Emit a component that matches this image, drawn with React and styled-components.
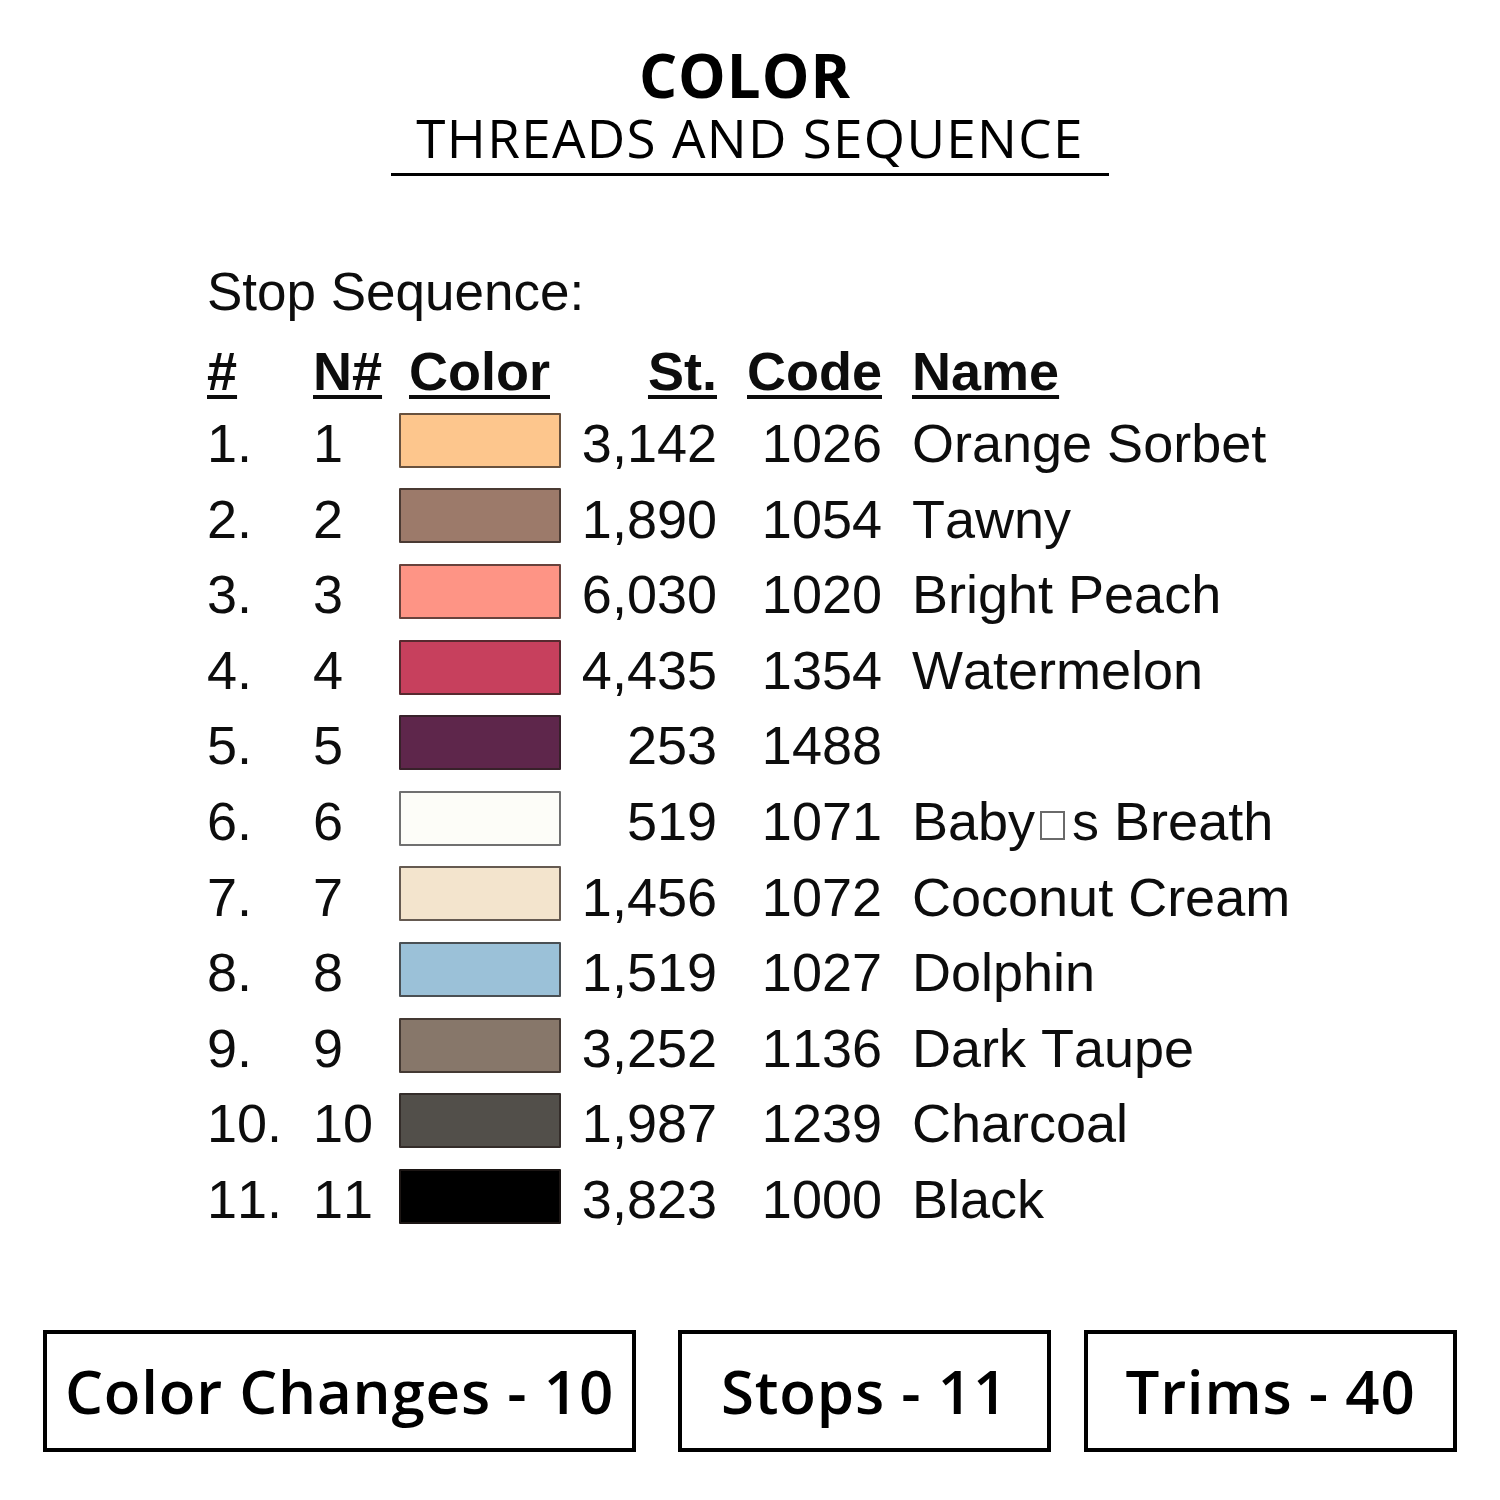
import styled, { createGlobalStyle } from "styled-components";

const GlobalStyle = createGlobalStyle`
  html, body {
    margin: 0;
    padding: 0;
    background: #fff;
  }
`;

const threads = [
  { no: 1, st: "3,142", code: "1026", name: "Orange Sorbet", color: "#fdc68d" },
  { no: 2, st: "1,890", code: "1054", name: "Tawny", color: "#9c7a6a" },
  { no: 3, st: "6,030", code: "1020", name: "Bright Peach", color: "#fe9485" },
  { no: 4, st: "4,435", code: "1354", name: "Watermelon", color: "#c7405d" },
  { no: 5, st: "253", code: "1488", name: "", color: "#5e264b" },
  { no: 6, st: "519", code: "1071", name: "Baby|s Breath", color: "#fdfdf8", light: true },
  { no: 7, st: "1,456", code: "1072", name: "Coconut Cream", color: "#f3e4cd" },
  { no: 8, st: "1,519", code: "1027", name: "Dolphin", color: "#9bc1d8" },
  { no: 9, st: "3,252", code: "1136", name: "Dark Taupe", color: "#87776a" },
  { no: 10, st: "1,987", code: "1239", name: "Charcoal", color: "#524f4a" },
  { no: 11, st: "3,823", code: "1000", name: "Black", color: "#000000" },
];

// the export lost the apostrophe, shown as an empty box
const ThreadName = ({ name }) => {
  const parts = name.split("|");
  if (parts.length === 1) return name;
  return (
    <>
      {parts[0]}
      <Missing />
      {parts[1]}
    </>
  );
};

const App = () => {
  return (
    <Page>
      <GlobalStyle />
      <Header>
        <Title>COLOR</Title>
        <Subtitle>THREADS AND SEQUENCE</Subtitle>
      </Header>
      <Sequence>
        <Caption>Stop Sequence:</Caption>
        <HeadRow>
          <Cell>#</Cell>
          <Cell>N#</Cell>
          <Cell $indent={10}>Color</Cell>
          <Cell $right>St.</Cell>
          <Cell $right>Code</Cell>
          <NameCell>Name</NameCell>
        </HeadRow>
        {threads.map((t) => (
          <Row key={t.no}>
            <Cell>{t.no}.</Cell>
            <Cell>{t.no}</Cell>
            <Swatch $color={t.color} $light={t.light} />
            <Cell $right>{t.st}</Cell>
            <Cell $right>{t.code}</Cell>
            <NameCell>
              <ThreadName name={t.name} />
            </NameCell>
          </Row>
        ))}
      </Sequence>
      <Stats>
        <StatBox $width={593}>Color Changes - 10</StatBox>
        <StatBox $width={373}>Stops - 11</StatBox>
        <StatBox $width={373}>Trims - 40</StatBox>
      </Stats>
    </Page>
  );
};

const Page = styled.div`
  width: 1500px;
  height: 1500px;
  display: flex;
  flex-direction: column;
  color: #000;
  overflow: hidden;
`;

const Header = styled.div`
  display: flex;
  flex-direction: column;
  align-items: center;
  padding-top: 45px;
  font-family: "Open Sans", "Liberation Sans", sans-serif;
`;

const Title = styled.div`
  font-size: 60px;
  line-height: 60px;
  font-weight: 700;
  letter-spacing: 1px;
  margin-right: 10px;
`;

const Subtitle = styled.div`
  margin-top: 6px;
  font-size: 53px;
  line-height: 53px;
  font-weight: 400;
  letter-spacing: 1.3px;
  padding: 0 25px 9px;
  border-bottom: 3px solid #000;
`;

const Sequence = styled.div`
  margin-top: 81px;
  padding-left: 207px;
  font-family: "Liberation Sans", Arial, sans-serif;
  font-size: 54px;
  font-kerning: none;
  color: #0d0d0d;
`;

const Caption = styled.div`
  height: 69px;
  line-height: 69px;
  margin-bottom: 11px;
  font-size: 53px;
`;

const columns = `106px 86px 162px 156px 165px 1fr`;

const HeadRow = styled.div`
  display: grid;
  grid-template-columns: ${columns};
  height: 69px;
  line-height: 69px;
  font-weight: 700;
  & > div {
    text-decoration: underline;
    text-decoration-thickness: 4px;
    text-underline-offset: 5px;
  }
`;

const Row = styled.div`
  display: grid;
  grid-template-columns: ${columns};
  align-items: center;
  height: 75.6px;
  line-height: 75.6px;
`;

const Cell = styled.div`
  text-align: ${(p) => (p.$right ? "right" : "left")};
  padding-left: ${(p) => p.$indent || 0}px;
  white-space: nowrap;
`;

const NameCell = styled(Cell)`
  padding-left: 30px;
`;

const Swatch = styled.div`
  box-sizing: border-box;
  width: 162px;
  height: 55px;
  margin-top: -7px;
  background: ${(p) => p.$color};
  border: 2px solid ${(p) => (p.$light ? "#707070" : "rgba(40, 32, 28, 0.7)")};
  border-radius: 1px;
`;

const Missing = styled.span`
  display: inline-block;
  box-sizing: border-box;
  width: 25px;
  height: 29px;
  margin: 0 7px 0 5px;
  border: 2px solid #6a6a6a;
`;

const Stats = styled.div`
  display: flex;
  margin-top: 92px;
  padding-left: 43px;
  & > div:nth-child(2) {
    margin-left: 42px;
  }
  & > div:nth-child(3) {
    margin-left: 33px;
  }
`;

const StatBox = styled.div`
  box-sizing: border-box;
  width: ${(p) => p.$width}px;
  height: 122px;
  border: 4px solid #000;
  display: flex;
  align-items: center;
  justify-content: center;
  font-family: "Open Sans", "Liberation Sans", sans-serif;
  font-size: 60px;
  font-weight: 600;
  letter-spacing: 0.8px;
  white-space: nowrap;
`;

export default App;
